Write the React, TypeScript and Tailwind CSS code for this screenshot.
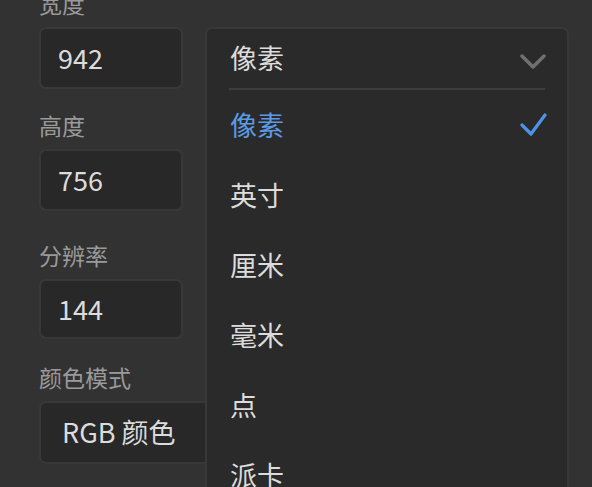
const font = { fontFamily: '"Noto Sans CJK SC", "Noto Sans", sans-serif' }

const units = ['像素', '英寸', '厘米', '毫米', '点', '派卡', '像素']

function Label({ text, className }: { text: string; className?: string }) {
  return <div className={`text-[23px] leading-none text-[#9a9a9a] ${className ?? ''}`}>{text}</div>
}

function Field({ value, h = 'h-[62px]' }: { value: string; h?: string }) {
  return (
    <div className={`w-[144px] ${h} rounded-[7px] border-2 border-[#383838] bg-[#282828] flex items-center pl-[17px] text-[27px] text-[#dcdcdc]`}>
      {value}
    </div>
  )
}

export default function App() {
  return (
    <div style={font} className="w-[592px] h-[487px] overflow-hidden bg-[#323232] pl-[39px] pr-[23px]">
      <Label text="宽度" className="mt-[-8px]" />
      <div className="mt-[12px] flex gap-[22px]">
        <Field value="942" />
        <div className="relative flex-1">
          {/* open unit menu, covers the rows below */}
          <div className="absolute left-0 right-0 top-0 z-10 h-[520px] rounded-t-[7px] border-2 border-[#383838] bg-[#2a2a2a] px-[22px]">
            <div className="h-[59px] flex items-center justify-between text-[27px] text-[#dcdcdc]">
              <span className="pl-[1px]">像素</span>
              <svg width="26" height="16" viewBox="0 0 26 16" className="mt-[6px] mr-[-1px]">
                <polyline points="2,2 13,13 24,2" fill="none" stroke="#6f6f6f" strokeWidth="3.5" strokeLinecap="round" strokeLinejoin="round" />
              </svg>
            </div>
            <div className="h-[2px] bg-[#3e3e3e]" />
            {units.map((u, i) => (
              <div key={i} className={`h-[70px] flex items-center justify-between text-[27px] ${i === 0 ? 'text-[#5b9be6]' : 'text-[#dcdcdc]'}`}>
                <span className="pl-[1px]">{u}</span>
                {i === 0 && (
                  <svg width="28" height="24" viewBox="0 0 28 24" className="mr-[-2px]">
                    <polyline points="3,12 12,21 26,2" fill="none" stroke="#4f93e8" strokeWidth="3.2" strokeLinecap="round" strokeLinejoin="round" />
                  </svg>
                )}
              </div>
            ))}
          </div>
        </div>
      </div>

      <Label text="高度" className="mt-[25px]" />
      <div className="mt-[12px]">
        <Field value="756" />
      </div>

      <Label text="分辨率" className="mt-[33px]" />
      <div className="mt-[12px]">
        <Field value="144" h="h-[60px]" />
      </div>

      <Label text="颜色模式" className="mt-[27px]" />
      <div className="mt-[12px] h-[63px] rounded-[7px] border-2 border-[#383838] bg-[#282828] flex items-center pl-[21px] text-[27px] text-[#dcdcdc]">
        RGB 颜色
      </div>
    </div>
  )
}
